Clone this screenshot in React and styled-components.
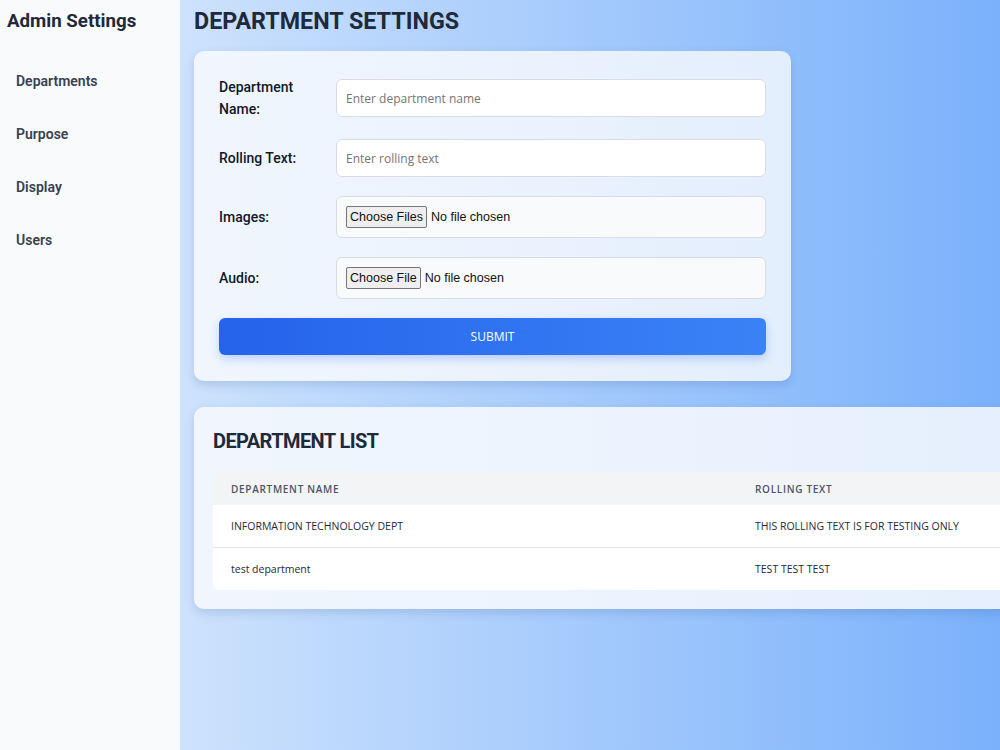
import React from 'react';
import styled, { createGlobalStyle } from 'styled-components';

const GlobalStyle = createGlobalStyle`
    html, body {
        margin: 0;
        padding: 0;
        height: 100%;
        overflow: hidden;
    }
    body {
        font-family: Roboto, 'Noto Sans', sans-serif;
        color: #1f2937;
    }
`;

const departments = [
    { name: "INFORMATION TECHNOLOGY DEPT", text: "THIS ROLLING TEXT IS FOR TESTING ONLY" },
    { name: "test department", text: "TEST TEST TEST" },
];

const navItems = ["Departments", "Purpose", "Display", "Users"];

function App() {
    return (
        <Layout>
            <GlobalStyle />

            <Sidebar>
                <Brand>Admin Settings</Brand>
                <Nav>
                    {navItems.map(item => (
                        <NavItem key={item}>{item}</NavItem>
                    ))}
                </Nav>
            </Sidebar>

            <Main>
                <PageTitle>DEPARTMENT SETTINGS</PageTitle>

                <FormCard>
                    <Form onSubmit={e => e.preventDefault()}>
                        <FormRow>
                            <Label htmlFor="deptName">Department Name:</Label>
                            <TextInput id="deptName" placeholder="Enter department name" />
                        </FormRow>
                        <FormRow>
                            <Label htmlFor="rolling">Rolling Text:</Label>
                            <TextInput id="rolling" placeholder="Enter rolling text" />
                        </FormRow>
                        <FormRow>
                            <Label htmlFor="images">Images:</Label>
                            <FileBox>
                                <input id="images" type="file" multiple />
                            </FileBox>
                        </FormRow>
                        <FormRow>
                            <Label htmlFor="audio">Audio:</Label>
                            <FileBox>
                                <input id="audio" type="file" />
                            </FileBox>
                        </FormRow>
                        <SubmitButton type="submit">SUBMIT</SubmitButton>
                    </Form>
                </FormCard>

                <ListCard>
                    <ListTitle>DEPARTMENT LIST</ListTitle>
                    <Table>
                        <colgroup>
                            <col style={{ width: 524 }} />
                            <col />
                        </colgroup>
                        <thead>
                            <tr>
                                <Th>DEPARTMENT NAME</Th>
                                <Th>ROLLING TEXT</Th>
                            </tr>
                        </thead>
                        <tbody>
                            {departments.map(d => (
                                <tr key={d.name}>
                                    <Td>{d.name}</Td>
                                    <Td>{d.text}</Td>
                                </tr>
                            ))}
                        </tbody>
                    </Table>
                </ListCard>
            </Main>
        </Layout>
    );
}

export default App;


const Layout = styled.div`
    display: flex;
    width: 100vw;
    height: 100vh;
`;

const Sidebar = styled.aside`
    width: 180px;
    flex-shrink: 0;
    background: #f8fafc;
    padding: 10px 0 0 7px;
    box-sizing: border-box;
`;

const Brand = styled.div`
    font-size: 18.7px;
    font-weight: 700;
    color: #1e293b;
    margin-bottom: 41px;
`;

const Nav = styled.nav`
    display: flex;
    flex-direction: column;
    gap: 36px;
    padding-left: 9px;
`;

const NavItem = styled.div`
    font-size: 14px;
    font-weight: 600;
    color: #374151;
    line-height: 17px;
    cursor: pointer;
`;

const Main = styled.main`
    flex: 1;
    min-width: 0;
    overflow: hidden;
    background: linear-gradient(to right, #cde2fd, #7ab1fb);
    padding: 7px 0 0 14px;
    box-sizing: border-box;
`;

const PageTitle = styled.h1`
    margin: 0 0 16px 0;
    font-size: 23.3px;
    font-weight: 700;
    color: #1e293b;
    line-height: 28px;
`;

const Card = styled.section`
    background: linear-gradient(to right, rgba(242, 247, 254, 0.97), rgba(232, 241, 253, 0.95));
    border-radius: 10px;
    box-shadow: 0 4px 10px rgba(30, 64, 120, 0.16);
    box-sizing: border-box;
`;

const FormCard = styled(Card)`
    width: 597px;
    padding: 25px 25px 26px 25px;
    margin-bottom: 26px;
`;

const Form = styled.form`
    display: flex;
    flex-direction: column;
    gap: 19px;
`;

const FormRow = styled.div`
    display: flex;
    align-items: center;
`;

const Label = styled.label`
    width: 117px;
    flex-shrink: 0;
    font-size: 14px;
    font-weight: 500;
    line-height: 22px;
    color: #111827;
    padding-right: 10px;
    box-sizing: border-box;
`;

const TextInput = styled.input`
    flex: 1;
    height: 38px;
    box-sizing: border-box;
    border: 1px solid #d9dde3;
    border-radius: 6px;
    background: #ffffff;
    padding: 0 9px;
    font-family: 'Open Sans', sans-serif;
    font-size: 12px;
    color: #111827;
    outline: none;
    ::placeholder {
        color: #9ca3af;
    }
`;

const FileBox = styled.div`
    flex: 1;
    height: 42px;
    box-sizing: border-box;
    border: 1px solid #d9dde3;
    border-radius: 6px;
    background: #f8fafc;
    display: flex;
    align-items: center;
    padding: 0 9px;
    input {
        font-family: 'Liberation Sans', Arial, sans-serif;
        font-size: 12.5px;
        color: #111;
    }
    input::file-selector-button {
        font-family: 'Liberation Sans', Arial, sans-serif;
        font-size: 12.5px;
        padding: 3px 3px;
        margin-right: 4px;
        background: #efefef;
        border: 1px solid #767676;
        border-radius: 2px;
        color: #111;
    }
`;

const SubmitButton = styled.button`
    height: 37px;
    border: none;
    border-radius: 6px;
    background: linear-gradient(to right, #2563eb, #3b82f6);
    color: #ffffff;
    font-family: 'Open Sans', sans-serif;
    font-size: 12px;
    box-shadow: 0 4px 10px rgba(37, 99, 235, 0.25);
    cursor: pointer;
`;

const ListCard = styled(Card)`
    width: 1100px;
    padding: 21px 20px 19px 19px;
`;

const ListTitle = styled.h2`
    margin: 0 0 18px 0;
    font-size: 20px;
    font-weight: 700;
    color: #1e293b;
    line-height: 26px;
    letter-spacing: -0.6px;
`;

const Table = styled.table`
    width: 100%;
    table-layout: fixed;
    border-collapse: collapse;
    background: #ffffff;
    border-radius: 6px;
    overflow: hidden;
    font-family: 'Open Sans', sans-serif;
`;

const Th = styled.th`
    height: 33px;
    padding: 0 18px;
    text-align: left;
    background: #f3f4f6;
    font-size: 10px;
    font-weight: 600;
    letter-spacing: 0.7px;
    color: #4b5563;
`;

const Td = styled.td`
    height: 42px;
    padding: 0 18px;
    font-size: 10.5px;
    color: #1f2937;
    border-top: 1px solid #e5e7eb;
    tr:first-child > & {
        border-top: none;
    }
`;
